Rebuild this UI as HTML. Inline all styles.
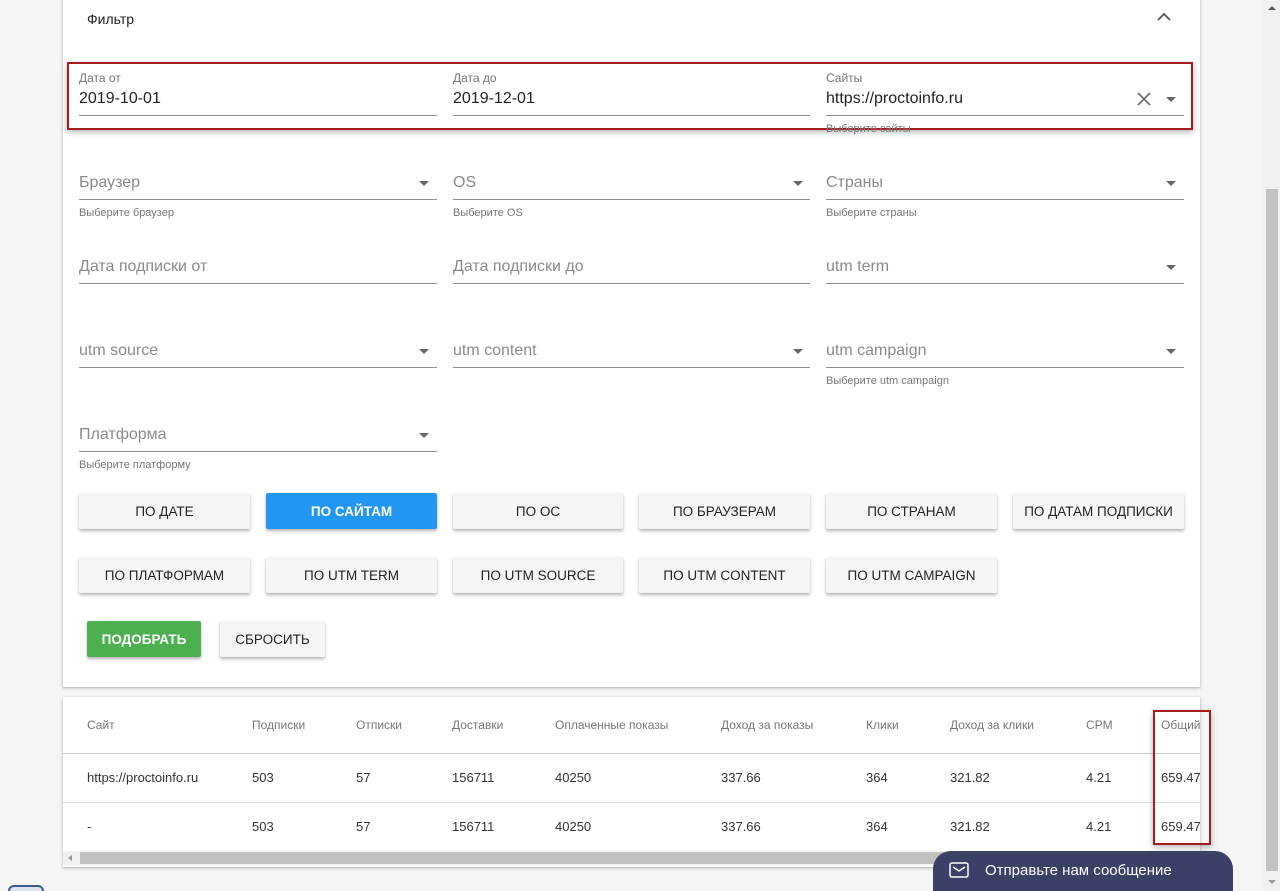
<!DOCTYPE html>
<html style="width:1280px;height:891px;overflow:hidden"><head><meta charset="utf-8"><style>
*{box-sizing:border-box;margin:0;padding:0}
body{width:1280px;height:891px;overflow:hidden;background:#f5f5f5;font-family:"Liberation Sans",sans-serif;position:relative;color:#333}
.a{position:absolute}
.card{background:#fff;box-shadow:0 1px 3px rgba(0,0,0,.3)}
.lbl{font-size:12px;color:#757575}
.val{font-size:16px;color:#222}
.ph{font-size:16px;color:#8a8a8a}
.line{height:1px;background:#8c8c8c}
.hint{font-size:11px;color:#777}
.arr{width:0;height:0;border-left:5px solid transparent;border-right:5px solid transparent;border-top:5px solid #666}
.btn{position:absolute;height:36px;background:#f5f5f5;box-shadow:0 2px 3px rgba(0,0,0,.3);border-radius:2px;font-size:13.5px;color:#222;display:flex;align-items:center;justify-content:center}
.th{position:absolute;top:718px;font-size:12px;color:#777}
.td{position:absolute;font-size:13px;color:#333}
</style></head><body>
<div class="a card" style="left:63px;top:-4px;width:1137px;height:691px"></div>
<div class="a" style="left:87px;top:11px;font-size:14px;color:#222">Фильтр</div>
<svg class="a" style="left:1156px;top:11px" width="16" height="12"><path d="M2 9 L8 3 L14 9" stroke="#555" stroke-width="1.8" fill="none"/></svg>
<div class="a" style="left:67px;top:62px;width:1126px;height:68px;border:2px solid #a51c1c;box-shadow:0 2px 6px rgba(0,0,0,.3)"></div>

<div class="a lbl" style="left:79px;top:71px">Дата от</div>
<div class="a val" style="left:79px;top:90px">2019-10-01</div>
<div class="a line" style="left:79px;top:115px;width:358px"></div>
<div class="a lbl" style="left:453px;top:71px">Дата до</div>
<div class="a val" style="left:453px;top:90px">2019-12-01</div>
<div class="a line" style="left:453px;top:115px;width:357px"></div>
<div class="a lbl" style="left:826px;top:71px">Сайты</div>
<div class="a val" style="left:826px;top:90px">https://proctoinfo.ru</div>
<svg class="a" style="left:1136px;top:91px" width="16" height="16"><path d="M2 2L14 14M14 2L2 14" stroke="#666" stroke-width="1.6"/></svg>
<div class="a arr" style="left:1166px;top:97px"></div>
<div class="a line" style="left:826px;top:115px;width:358px"></div>
<div class="a hint" style="left:826px;top:123px">Выберите сайты</div>

<div class="a ph" style="left:79px;top:174px">Браузер</div><div class="a arr" style="left:419px;top:181px"></div>
<div class="a line" style="left:79px;top:199px;width:358px"></div><div class="a hint" style="left:79px;top:207px">Выберите браузер</div>
<div class="a ph" style="left:453px;top:174px">OS</div><div class="a arr" style="left:793px;top:181px"></div>
<div class="a line" style="left:453px;top:199px;width:357px"></div><div class="a hint" style="left:453px;top:207px">Выберите OS</div>
<div class="a ph" style="left:826px;top:174px">Страны</div><div class="a arr" style="left:1166px;top:181px"></div>
<div class="a line" style="left:826px;top:199px;width:358px"></div><div class="a hint" style="left:826px;top:207px">Выберите страны</div>

<div class="a ph" style="left:79px;top:258px">Дата подписки от</div>
<div class="a line" style="left:79px;top:283px;width:358px"></div>
<div class="a ph" style="left:453px;top:258px">Дата подписки до</div>
<div class="a line" style="left:453px;top:283px;width:357px"></div>
<div class="a ph" style="left:826px;top:258px">utm term</div><div class="a arr" style="left:1166px;top:265px"></div>
<div class="a line" style="left:826px;top:283px;width:358px"></div>

<div class="a ph" style="left:79px;top:342px">utm source</div><div class="a arr" style="left:419px;top:349px"></div>
<div class="a line" style="left:79px;top:367px;width:358px"></div>
<div class="a ph" style="left:453px;top:342px">utm content</div><div class="a arr" style="left:793px;top:349px"></div>
<div class="a line" style="left:453px;top:367px;width:357px"></div>
<div class="a ph" style="left:826px;top:342px">utm campaign</div><div class="a arr" style="left:1166px;top:349px"></div>
<div class="a line" style="left:826px;top:367px;width:358px"></div><div class="a hint" style="left:826px;top:375px">Выберите utm campaign</div>

<div class="a ph" style="left:79px;top:426px">Платформа</div><div class="a arr" style="left:419px;top:433px"></div>
<div class="a line" style="left:79px;top:451px;width:358px"></div><div class="a hint" style="left:79px;top:459px">Выберите платформу</div>

<div class="btn" style="left:79px;top:493px;width:171px">ПО ДАТЕ</div>
<div class="btn" style="left:266px;top:493px;width:171px;background:#2196f3;color:#fff;font-weight:bold">ПО САЙТАМ</div>
<div class="btn" style="left:453px;top:493px;width:170px">ПО ОС</div>
<div class="btn" style="left:639px;top:493px;width:171px">ПО БРАУЗЕРАМ</div>
<div class="btn" style="left:826px;top:493px;width:171px">ПО СТРАНАМ</div>
<div class="btn" style="left:1013px;top:493px;width:171px">ПО ДАТАМ ПОДПИСКИ</div>
<div class="btn" style="left:79px;top:557px;width:171px">ПО ПЛАТФОРМАМ</div>
<div class="btn" style="left:266px;top:557px;width:171px">ПО UTM TERM</div>
<div class="btn" style="left:453px;top:557px;width:170px">ПО UTM SOURCE</div>
<div class="btn" style="left:639px;top:557px;width:171px">ПО UTM CONTENT</div>
<div class="btn" style="left:826px;top:557px;width:171px">ПО UTM CAMPAIGN</div>
<div class="btn" style="left:87px;top:621px;width:114px;background:#4caf50;color:#fff;font-weight:bold">ПОДОБРАТЬ</div>
<div class="btn" style="left:220px;top:621px;width:105px">СБРОСИТЬ</div>

<div class="a card" style="left:63px;top:697px;width:1137px;height:170px"></div>
<div class="th" style="left:87px">Сайт</div><div class="th" style="left:252px">Подписки</div><div class="th" style="left:356px">Отписки</div>
<div class="th" style="left:452px">Доставки</div><div class="th" style="left:555px">Оплаченные показы</div><div class="th" style="left:721px">Доход за показы</div>
<div class="th" style="left:866px">Клики</div><div class="th" style="left:950px">Доход за клики</div><div class="th" style="left:1086px">CPM</div><div class="th" style="left:1161px">Общий</div>
<div class="a" style="left:63px;top:753px;width:1137px;height:1px;background:#ccc"></div>
<div class="a" style="left:63px;top:802px;width:1137px;height:1px;background:#ddd"></div>
<div class="td" style="left:87px;top:770px">https://proctoinfo.ru</div><div class="td" style="left:252px;top:770px">503</div><div class="td" style="left:356px;top:770px">57</div>
<div class="td" style="left:452px;top:770px">156711</div><div class="td" style="left:555px;top:770px">40250</div><div class="td" style="left:721px;top:770px">337.66</div>
<div class="td" style="left:866px;top:770px">364</div><div class="td" style="left:950px;top:770px">321.82</div><div class="td" style="left:1086px;top:770px">4.21</div><div class="td" style="left:1161px;top:770px">659.47</div>
<div class="td" style="left:87px;top:819px">-</div><div class="td" style="left:252px;top:819px">503</div><div class="td" style="left:356px;top:819px">57</div>
<div class="td" style="left:452px;top:819px">156711</div><div class="td" style="left:555px;top:819px">40250</div><div class="td" style="left:721px;top:819px">337.66</div>
<div class="td" style="left:866px;top:819px">364</div><div class="td" style="left:950px;top:819px">321.82</div><div class="td" style="left:1086px;top:819px">4.21</div><div class="td" style="left:1161px;top:819px">659.47</div>
<div class="a" style="left:63px;top:851px;width:1137px;height:14px;background:#f0f0f0"></div>
<div class="a" style="left:80px;top:852px;width:1120px;height:12px;background:#c1c1c1"></div>
<div class="a" style="left:68px;top:855px;width:0;height:0;border-top:3px solid transparent;border-bottom:3px solid transparent;border-right:4px solid #999"></div>
<div class="a" style="left:1153px;top:710px;width:58px;height:135px;border:2px solid #a51c1c;box-shadow:0 2px 6px rgba(0,0,0,.3)"></div>

<div class="a" style="left:933px;top:851px;width:300px;height:40px;background:#3b4166;border-radius:18px 18px 0 0"></div>
<svg class="a" style="left:949px;top:862px" width="20" height="16"><rect x="1" y="1" width="18" height="14" rx="2" fill="none" stroke="#fff" stroke-width="1.5"/><path d="M4 5L10 9L16 5" fill="none" stroke="#fff" stroke-width="1.5"/></svg>
<div class="a" style="left:985px;top:862px;font-size:15px;color:#fff">Отправьте нам сообщение</div>
<div class="a" style="left:8px;top:885px;width:36px;height:6px;border-radius:18px 18px 0 0;border:2px solid #3b5a8a;border-bottom:none;background:#dde6f0"></div>

<div class="a" style="left:1263px;top:0;width:17px;height:891px;background:#f1f1f1"></div>
<div class="a" style="left:1266px;top:189px;width:12px;height:682px;background:#c1c1c1"></div>
<div class="a" style="left:1268px;top:6px;width:0;height:0;border-left:4px solid transparent;border-right:4px solid transparent;border-bottom:4px solid #555"></div>
<div class="a" style="left:1268px;top:880px;width:0;height:0;border-left:4px solid transparent;border-right:4px solid transparent;border-top:4px solid #999"></div>
</body></html>
